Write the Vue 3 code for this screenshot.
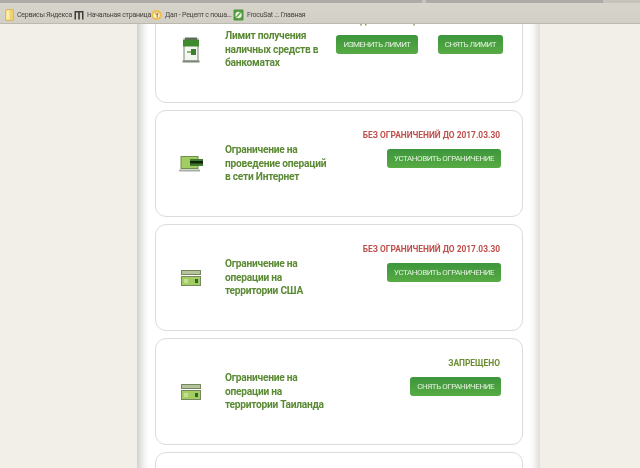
<script setup>
const bookmarks = [
  { id: 'folder', label: 'Сервисы Яндекса' },
  { id: 'm', label: 'Начальная страница' },
  { id: 'ya', label: 'Дал - Рецепт с поша...' },
  { id: 'fs', label: 'FrocuSat .:. Главная' }
]
const cards = [
  { icon: 'atm', title: ['Лимит получения', 'наличных средств в', 'банкоматах'], status: 'ДЕЙСТВУЮЩИЙ ЛИМИТ 7 430 USD', tone: 'ok', buttons: ['ИЗМЕНИТЬ ЛИМИТ', 'СНЯТЬ ЛИМИТ'] },
  { icon: 'laptop', title: ['Ограничение на', 'проведение операций', 'в сети Интернет'], status: 'БЕЗ ОГРАНИЧЕНИЙ ДО 2017.03.30', tone: 'warn', buttons: ['УСТАНОВИТЬ ОГРАНИЧЕНИЕ'] },
  { icon: 'card', title: ['Ограничение на', 'операции на', 'территории США'], status: 'БЕЗ ОГРАНИЧЕНИЙ ДО 2017.03.30', tone: 'warn', buttons: ['УСТАНОВИТЬ ОГРАНИЧЕНИЕ'] },
  { icon: 'card', title: ['Ограничение на', 'операции на', 'территории Таиланда'], status: 'ЗАПРЕЩЕНО', tone: 'ok', buttons: ['СНЯТЬ ОГРАНИЧЕНИЕ'] },
  { icon: null, title: [], status: '', tone: 'ok', buttons: [] }
]
</script>

<template>
  <div class="screen">
    <header class="chrome">
      <div class="tabs"><span class="tab t1"></span><span class="tab t2"></span></div>
      <nav class="bookmarks">
        <a v-for="b in bookmarks" :key="b.id" class="bookmark" :class="'b-' + b.id">
          <svg v-if="b.id === 'folder'" width="9" height="12" viewBox="0 0 9 12"><rect x="0.5" y="0.5" width="8" height="11" rx="1.5" fill="#f2d36b" stroke="#c9a83e" stroke-width=".6"/><rect x="1.5" y="1.5" width="3" height="9" fill="#fbeeb0"/></svg>
          <svg v-else-if="b.id === 'm'" width="10" height="10" viewBox="0 0 10 10"><path d="M0.5 1H9.5V9.5H8V2.5H5.8V9.5H4.2V2.5H2V9.5H0.5Z" fill="#3c3c3a"/></svg>
          <svg v-else-if="b.id === 'ya'" width="11" height="12" viewBox="0 0 11 12"><circle cx="5.5" cy="6" r="5" fill="#f2bc40"/><circle cx="5.5" cy="6" r="3.2" fill="#fbeec0"/><path d="M4.2 3.5L6.2 6.2V8.8M7 3.5L6.2 6.2" stroke="#a8742a" stroke-width="1" fill="none"/></svg>
          <svg v-else width="11" height="12" viewBox="0 0 11 12"><rect x="0.5" y="0.5" width="10" height="11" rx="1" fill="#4f9a3c"/><circle cx="5.5" cy="6" r="3.2" fill="#e6f2dc"/><path d="M3.5 8L7.5 3.5" stroke="#5d9e48" stroke-width="1.2"/></svg>
          <span>{{ b.label }}</span>
        </a>
      </nav>
    </header>

    <main class="viewport">
      <div class="page">
        <section v-for="(c, i) in cards" :key="i" class="card">
          <div class="icon">
            <svg v-if="c.icon === 'atm'" width="18" height="26" viewBox="0 0 18 26">
              <rect x="2" y="2" width="14" height="22" fill="#f4f6f0" stroke="#8f9a88" stroke-width="1.2"/>
              <path d="M1 3H17V9.5H1Z" fill="#3f8a2e"/>
              <rect x="3" y="0.5" width="12" height="2.5" fill="#5b6f52"/>
              <rect x="9" y="12" width="5" height="6" fill="#3f7d33"/>
              <rect x="5" y="14" width="4" height="2" fill="#8db872"/>
              <rect x="0.5" y="23.5" width="17" height="2" fill="#7d8577"/>
            </svg>
            <svg v-else-if="c.icon === 'laptop'" width="24" height="16" viewBox="0 0 24 16">
              <rect x="2" y="0.5" width="17" height="12" fill="#a3cc62" stroke="#6f8f50"/>
              <rect x="0" y="13.5" width="21" height="2" fill="#a8aea2"/>
              <rect x="11" y="3" width="13" height="7" fill="#3e7a2e"/>
              <rect x="11" y="5" width="13" height="2.5" fill="#12260c"/>
            </svg>
            <svg v-else-if="c.icon === 'card'" width="20" height="16" viewBox="0 0 20 16">
              <rect x="0.5" y="0.5" width="19" height="4" fill="#b5c39f" stroke="#76875f"/>
              <rect x="0.5" y="6.5" width="19" height="9" fill="#a3cc62" stroke="#76875f"/>
              <rect x="3" y="9" width="4" height="4" fill="#c6dd96"/>
              <rect x="14" y="9" width="3" height="4" fill="#2f6a25"/>
            </svg>
          </div>
          <h3 class="title">
            <span v-for="line in c.title" :key="line">{{ line }}</span>
          </h3>
          <div v-if="c.status" class="actions" :class="{ wide: c.buttons.length > 1 }">
            <p class="status" :class="c.tone">{{ c.status }}</p>
            <div class="buttons">
              <button v-for="b in c.buttons" :key="b" class="btn" type="button">{{ b }}</button>
            </div>
          </div>
        </section>
      </div>
    </main>
  </div>
</template>

<style>
html, body { margin: 0; padding: 0; background: #f1efe8; overflow: hidden; }
</style>

<style scoped>
.screen {
  width: 640px;
  height: 468px;
  display: flex;
  flex-direction: column;
  overflow: hidden;
  background: #f1efe8;
  font-family: Roboto, "Liberation Sans", Arial, sans-serif;
  filter: blur(0.3px);
}
.chrome {
  flex: none;
  height: 24px;
  box-sizing: border-box;
  background: linear-gradient(#d8d5cd, #d2cfc6);
  border-bottom: 1px solid #bdb9b0;
  position: relative;
  z-index: 2;
}
.tabs {
  height: 3px;
  display: flex;
  gap: 4px;
  background: #c6c3bb;
}
.tab { display: block; height: 3px; background: #aeaba6; }
.t1 { width: 422px; }
.t2 { width: 177px; }
.bookmarks {
  height: 20px;
  display: flex;
  align-items: center;
  padding: 3px 0 0 5px;
  box-sizing: border-box;
  gap: 5px;
}
.bookmark {
  display: flex;
  align-items: center;
  gap: 3px;
  font-size: 7px;
  letter-spacing: -0.25px;
  color: #45443f;
  white-space: nowrap;
}
.b-folder span { width: 52px; }
.b-m span { width: 59px; }
.b-ya span { width: 63px; }
.viewport {
  flex: 1;
  min-height: 0;
  overflow: hidden;
}
.page {
  width: 403px;
  margin: -28px 0 0 137px;
  box-sizing: border-box;
  padding: 0 17px 0 18px;
  background: #fff;
  box-shadow: inset 13px 0 10px -9px #c8c8c4, inset -11px 0 9px -8px #d4d4d0;
  display: flex;
  flex-direction: column;
  gap: 7px;
  min-height: 600px;
}
.card {
  flex: none;
  height: 107px;
  box-sizing: border-box;
  border: 1px solid #dcdcdc;
  border-radius: 11px;
  background: #fff;
  display: flex;
  align-items: center;
  padding-right: 21px;
}
.icon {
  flex: none;
  width: 69px;
  display: flex;
  justify-content: center;
}
.title {
  flex: 1;
  margin: 0;
  display: flex;
  flex-direction: column;
  font-size: 10.2px;
  letter-spacing: -0.25px;
  line-height: 13.6px;
  font-weight: bold;
  color: #5b8a35;
  white-space: nowrap;
}
.actions {
  align-self: flex-start;
  display: flex;
  flex-direction: column;
  align-items: flex-end;
  padding-top: 19px;
}
.actions.wide { margin-right: -2px; }
.actions.wide .status { margin-right: 3px; }
.status {
  margin: 0 1px 0 0;
  height: 11px;
  line-height: 11px;
  font-size: 8.4px;
  font-weight: bold;
  white-space: nowrap;
}
.status.warn { color: #c0504d; }
.status.ok { color: #6a8c2f; }
.buttons {
  display: flex;
  gap: 20px;
  margin-top: 8px;
}
.btn {
  height: 19px;
  padding: 0 7px;
  border: 0;
  border-radius: 3px;
  background: linear-gradient(#3c963c, #58ab44);
  color: #e4f2df;
  font-family: inherit;
  font-size: 8px;
  letter-spacing: -0.47px;
  line-height: 19px;
  white-space: nowrap;
}
</style>
